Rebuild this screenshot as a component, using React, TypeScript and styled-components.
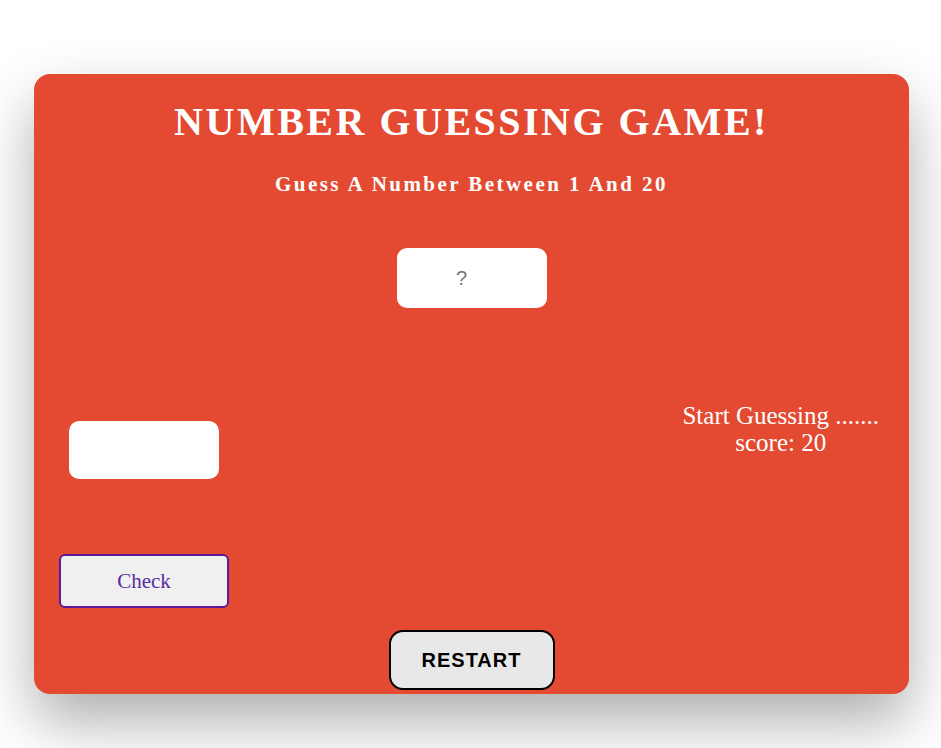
import React, { useState } from "react";
import styled, { createGlobalStyle } from "styled-components";

const GlobalStyle = createGlobalStyle`
  html, body {
    margin: 0;
    padding: 0;
    background: #ffffff;
  }
  body {
    font-family: "Liberation Serif", "Times New Roman", serif;
    overflow: hidden;
  }
`;

const App: React.FC = () => {
  const [guess, setGuess] = useState("");
  const [score] = useState(20);

  return (
    <StyledPage>
      <GlobalStyle />
      <StyledCard>
        <StyledTitle>NUMBER GUESSING GAME!</StyledTitle>
        <StyledSubtitle>Guess A Number Between 1 And 20</StyledSubtitle>
        <StyledSecret placeholder="?" readOnly />

        <StyledRow>
          <StyledControls>
            <StyledGuessInput value={guess} onChange={(e) => setGuess(e.target.value)} />
            <StyledCheck>Check</StyledCheck>
          </StyledControls>
          <StyledStatus>
            <span>Start Guessing .......</span>
            <span>score: {score}</span>
          </StyledStatus>
        </StyledRow>

        <StyledRestart>RESTART</StyledRestart>
      </StyledCard>
    </StyledPage>
  );
};

const StyledPage = styled.div`
  width: 100%;
  height: 748px;
  padding: 74px 0 0 34px;
  box-sizing: border-box;
`;

const StyledCard = styled.div`
  width: 875px;
  height: 620px;
  box-sizing: border-box;
  padding: 24px 0 4px;
  display: flex;
  flex-direction: column;
  align-items: center;
  background: #e34a31;
  border-radius: 16px;
  box-shadow: 0 28px 60px rgba(0, 0, 0, 0.32);
  color: #ffffff;
`;

const StyledTitle = styled.h1`
  margin: 0;
  font-size: 40px;
  line-height: 48px;
  font-weight: 700;
  letter-spacing: 2.5px;
`;

const StyledSubtitle = styled.h3`
  margin: 26px 0 0;
  font-size: 21px;
  line-height: 24px;
  font-weight: 700;
  letter-spacing: 2.45px;
`;

const StyledSecret = styled.input`
  margin-top: 52px;
  width: 150px;
  height: 60px;
  box-sizing: border-box;
  border: none;
  border-radius: 10px;
  background: #ffffff;
  padding: 0 20px 0 0;
  text-align: center;
  font-family: "Liberation Sans", Arial, sans-serif;
  font-size: 20px;
  outline: none;
  &::placeholder {
    color: #757575;
  }
`;

const StyledRow = styled.div`
  align-self: stretch;
  margin-top: 94px;
  padding: 0 30px 0 25px;
  display: flex;
  justify-content: space-between;
  align-items: flex-start;
`;

const StyledControls = styled.div`
  width: 170px;
  margin-top: 19px;
  display: flex;
  flex-direction: column;
  align-items: center;
  gap: 75px;
`;

const StyledGuessInput = styled.input`
  width: 150px;
  height: 58px;
  box-sizing: border-box;
  border: none;
  border-radius: 10px;
  background: #ffffff;
  text-align: center;
  font-family: "Liberation Sans", Arial, sans-serif;
  font-size: 20px;
  outline: none;
`;

const StyledCheck = styled.button`
  width: 170px;
  height: 54px;
  box-sizing: border-box;
  background: #f0f0f0;
  border: 2px solid #5c1a94;
  border-radius: 6px;
  color: #5a2aa3;
  font-family: "Liberation Serif", "Times New Roman", serif;
  font-size: 21px;
  cursor: pointer;
`;

const StyledStatus = styled.div`
  display: flex;
  flex-direction: column;
  align-items: center;
  font-size: 25px;
  line-height: 27px;
  color: #ffffff;
`;

const StyledRestart = styled.button`
  margin-top: auto;
  width: 166px;
  height: 60px;
  box-sizing: border-box;
  background: #e8e8e8;
  border: 2px solid #000000;
  border-radius: 14px;
  color: #000000;
  font-family: "Liberation Sans", Arial, sans-serif;
  font-size: 20px;
  font-weight: 700;
  letter-spacing: 1px;
  cursor: pointer;
`;

export default App;
